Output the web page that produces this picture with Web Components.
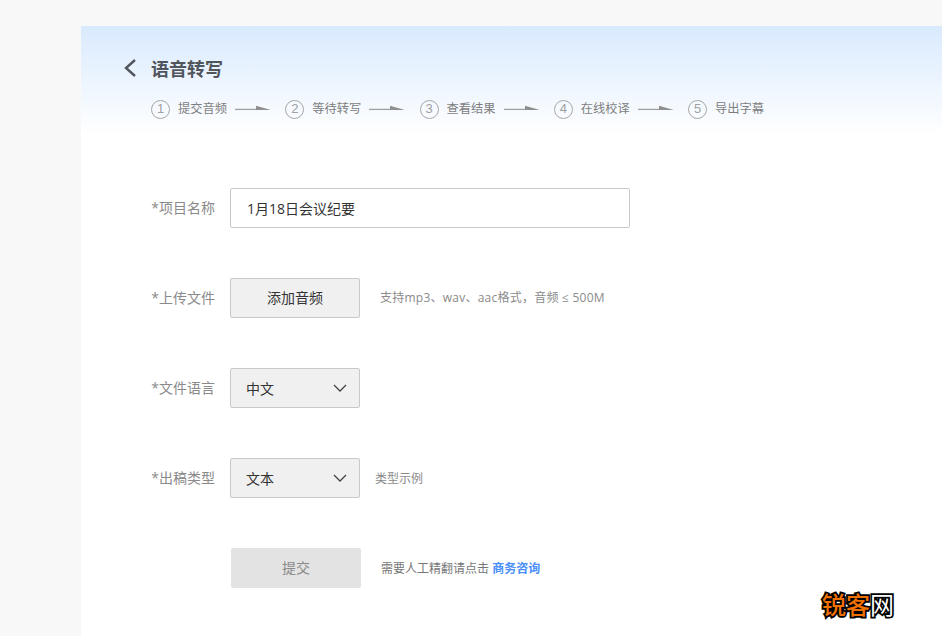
<!DOCTYPE html>
<html lang="zh">
<head>
<meta charset="utf-8">
<style>
html,body{margin:0;height:100%;overflow:hidden}
body{background:#f8f8f8;font-family:"Open Sans","Noto Sans CJK SC",sans-serif}
</style>
</head>
<body>
<transcribe-page>
  <page-header slot="header" title="语音转写">
    <step-item n="1" arrow>提交音频</step-item>
    <step-item n="2" arrow>等待转写</step-item>
    <step-item n="3" arrow>查看结果</step-item>
    <step-item n="4" arrow>在线校译</step-item>
    <step-item n="5">导出字幕</step-item>
  </page-header>
  <form-row label="*项目名称"><text-field value="1月18日会议纪要"></text-field></form-row>
  <form-row label="*上传文件"><gray-button>添加音频</gray-button><form-note gap="20" wide>支持mp3、wav、aac格式，音频 ≤ 500M</form-note></form-row>
  <form-row label="*文件语言"><select-box>中文</select-box></form-row>
  <form-row label="*出稿类型"><select-box>文本</select-box><form-note gap="15" low>类型示例</form-note></form-row>
  <form-row><submit-button>提交</submit-button><form-note gap="20" dark low>需要人工精翻请点击 <b style="color:#4a8efa;font-weight:700">商务咨询</b></form-note></form-row>
</transcribe-page>
<water-mark></water-mark>
<script>
function def(name, html, init){
  customElements.define(name, class extends HTMLElement{
    connectedCallback(){
      if(this.shadowRoot) return;
      const r=this.attachShadow({mode:'open'});
      r.innerHTML=html;
      if(init) init(this,r);
    }
  });
}
def('transcribe-page',`<style>
:host{display:block;margin:26px 0 0 81px;background:#fff;height:610px}
.form{display:flex;flex-direction:column;gap:50px;padding-top:53px}
</style><slot name="header"></slot><div class="form"><slot></slot></div>`);
def('page-header',`<style>
:host{display:block;height:109px;box-sizing:border-box;padding:31px 0 0 43px;background:linear-gradient(#d9eafe,#fff)}
.top{display:flex;align-items:center;height:22px;gap:15px}
svg{display:block}
h1{margin:2px 0 0;font-size:18px;font-weight:700;color:#51555c;line-height:22px}
.steps{display:flex;margin:20px 0 0 27px;align-items:center}
</style><div class="top"><svg width="12" height="18" viewBox="0 0 12 18"><path d="M11 1 L2 9 L11 17" fill="none" stroke="#51555c" stroke-width="2.4"/></svg><h1></h1></div><div class="steps"><slot></slot></div>`,
(h,r)=>{r.querySelector('h1').textContent=h.getAttribute('title')});
def('step-item',`<style>
:host{display:flex;align-items:center;font-size:12.25px;color:#7e7e7e;line-height:20px}
.c{width:17px;height:17px;border:1px solid #a6a6a6;border-radius:50%;display:flex;align-items:center;justify-content:center;font-size:13px;color:#a0a0a0;font-family:"Liberation Sans",sans-serif;margin-right:8px}
.t{display:block;padding-bottom:0}
svg{display:block;margin:0 15.25px 0 8px}
</style><span class="c"></span><span class="t"><slot></slot></span><svg width="35" height="8" viewBox="0 0 35 8"><path d="M0 4.4H22" stroke="#a0a0a0" stroke-width="1.3"/><path d="M21 .8L35 4.8V5.1H21Z" fill="#8f8f8f"/></svg>`,
(h,r)=>{r.querySelector('.c').textContent=h.getAttribute('n'); if(!h.hasAttribute('arrow')) r.querySelector('svg').remove();});
def('form-row',`<style>
:host{display:flex;align-items:center;height:40px}
.l{width:134px;margin-right:15px;text-align:right;font-size:14px;line-height:20px;color:#8a8a8a;flex:none}
</style><span class="l"></span><slot></slot>`,
(h,r)=>{r.querySelector('.l').textContent=h.getAttribute('label')||''});
def('form-note',`<style>
:host{display:block;font-size:12px;line-height:20px;color:#8a8a8a}
:host([dark]){color:#777}
:host([wide]){letter-spacing:.24px}
:host([low]){padding-top:2px}
</style><slot></slot>`,(h)=>{h.style.marginLeft=h.getAttribute('gap')+'px'});
def('text-field',`<style>
:host{display:flex;align-items:center;box-sizing:border-box;width:400px;height:40px;border:1px solid #c9c9c9;border-radius:2px;padding:0 0 0 16px;font-size:14px;color:#333;background:#fff}
</style><span></span>`,(h,r)=>{r.querySelector('span').textContent=h.getAttribute('value')});
def('gray-button',`<style>
:host{display:flex;align-items:center;justify-content:center;box-sizing:border-box;width:130px;height:40px;border:1px solid #c9c9c9;border-radius:2px;background:#f0f0f0;padding-bottom:2px;font-size:14px;color:#333}
</style><slot></slot>`);
def('select-box',`<style>
:host{display:flex;align-items:center;justify-content:space-between;box-sizing:border-box;width:130px;height:40px;border:1px solid #c9c9c9;border-radius:2px;background:#f0f0f0;padding:0 12px 1px 15px;font-size:14px;color:#333}
svg{display:block}
</style><slot></slot><svg width="14" height="8" viewBox="0 0 14 8"><path d="M1 1L7 7L13 1" fill="none" stroke="#444" stroke-width="1.3"/></svg>`);
def('submit-button',`<style>
:host{display:flex;align-items:center;justify-content:center;width:130px;height:40px;box-sizing:border-box;margin-left:1px;border-radius:2px;background:#e3e3e3;padding-bottom:2px;font-size:14px;color:#8a8a8a}
</style><slot></slot>`);
def('water-mark',`<style>
:host{position:absolute;left:822px;top:589px;font:500 24px/30px "Noto Sans CJK SC",sans-serif;white-space:nowrap}
span{-webkit-text-stroke:3.5px #000;paint-order:stroke fill}
.o{color:#f07000}.w{color:#fff;font-weight:400}
</style><span class="o">锐客</span><span class="w">网</span>`);
</script>
</body>
</html>
